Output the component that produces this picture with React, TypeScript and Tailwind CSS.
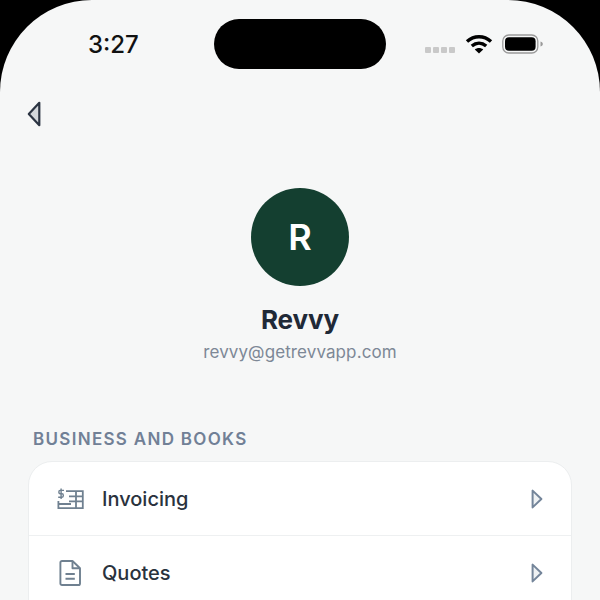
import React from "react";

function Wifi() {
  return (
    <svg width="28" height="20" viewBox="0 0 28 20" fill="none" stroke="#000" strokeWidth="3.4">
      <path d="M2 7.6C9 1.2 19 1.2 26 7.6" />
      <path d="M6.8 12C11.2 8.2 16.8 8.2 21.2 12" />
      <path d="M14 19.5L9.8 15.4C12.3 13.4 15.7 13.4 18.2 15.4Z" fill="#000" stroke="none" />
    </svg>
  );
}

function Battery() {
  return (
    <svg width="42" height="20" viewBox="0 0 42 20">
      <rect x="0.8" y="1" width="35" height="18" rx="6" fill="none" stroke="#9a9a9a" strokeWidth="1.3" />
      <rect x="3" y="3.2" width="30.6" height="13.6" rx="4" fill="#000" />
      <path d="M38.5 7.5C40.2 8 40.8 9 40.8 10S40.2 12 38.5 12.5Z" fill="#9a9a9a" />
    </svg>
  );
}

function BackTriangle() {
  return (
    <svg width="14" height="26" viewBox="0 0 14 26">
      <path d="M12.3 1.8V24.2L1.8 13Z" fill="#d3d7db" stroke="#2b3442" strokeWidth="2.2" strokeLinejoin="round" />
    </svg>
  );
}

function Chevron() {
  return (
    <svg width="12" height="20" viewBox="0 0 12 20">
      <path d="M1.6 1.6V18.4L10.4 10Z" fill="#eef1f3" stroke="#74859a" strokeWidth="2" strokeLinejoin="round" />
    </svg>
  );
}

function InvoiceIcon() {
  return (
    <svg width="27" height="22" viewBox="0 0 27 22" fill="none" stroke="#6f8090" strokeWidth="1.8">
      <path d="M9 3.2H25.8V20.2H1.4V13" />
      <path d="M12 8.4H25.8M12 13.4H25.8M19 3.2V20.2M1.4 16H14" />
      <path d="M7 2.4H3.2C1.4 2.4 1.4 5.8 3.2 5.8H5C6.8 5.8 6.8 9.2 5 9.2H1.2M4.1 0.6V11" strokeWidth="1.4" />
    </svg>
  );
}

function QuoteIcon() {
  return (
    <svg width="22" height="26" viewBox="0 0 22 26" fill="none" stroke="#6f8090" strokeWidth="1.9" strokeLinejoin="round">
      <path d="M3 1H13.5L21 8.2V23.4C21 24.3 20.3 25 19.4 25H3C2.1 25 1.4 24.3 1.4 23.4V2.6C1.4 1.7 2.1 1 3 1Z" />
      <path d="M13.5 1V8.2H21" />
      <path d="M6.5 14H15.8M6.5 18.8H15.8" />
    </svg>
  );
}

function Row({ icon, label, border, inset }: { icon: React.ReactNode; label: string; border?: boolean; inset?: boolean }) {
  return (
    <div className={`flex h-[74px] shrink-0 items-center pl-[28px] pr-[28px] ${border ? "border-b border-[#eef0f1]" : ""}`}>
      <div className={`flex w-[45px] shrink-0 justify-start ${inset ? "pl-[2px]" : ""}`}>{icon}</div>
      <span className="flex-1 text-[20px] font-[450] leading-[26px] text-[#2a323d]">{label}</span>
      <Chevron />
    </div>
  );
}

export default function App() {
  return (
    <div className="h-[600px] w-[600px] overflow-hidden bg-black font-['Inter',sans-serif]">
      <div className="relative flex h-[600px] flex-col rounded-t-[92px] bg-[#f6f7f7]">
        <div className="absolute left-[214px] top-[19px] h-[50px] w-[172px] rounded-full bg-black" />

        <div className="flex h-[88px] shrink-0 items-center pl-[88px] pr-[56px]">
          <span className="mr-auto pt-[1px] text-[24px] font-[550] leading-[87px] text-[#111]">3:27</span>
          <div className="mr-[10px] flex gap-[2px] pt-[12px]">
            <span className="h-[6px] w-[6px] rounded-[1px] bg-[#c9c9c9]" />
            <span className="h-[6px] w-[6px] rounded-[1px] bg-[#c9c9c9]" />
            <span className="h-[6px] w-[6px] rounded-[1px] bg-[#c9c9c9]" />
            <span className="h-[6px] w-[6px] rounded-[1px] bg-[#c9c9c9]" />
          </div>
          <div className="mr-[9px] flex"><Wifi /></div>
          <div className="flex"><Battery /></div>
        </div>

        <div className="flex h-[100px] shrink-0 items-start pl-[27px] pt-[13px]">
          <BackTriangle />
        </div>

        <div className="flex shrink-0 flex-col items-center">
          <div className="flex h-[98px] w-[98px] items-center justify-center rounded-full bg-[#143f30] text-[36px] font-semibold text-white">R</div>
          <div className="mt-[17px] text-[26px] font-bold leading-[34px] tracking-[-0.1px] text-[#1f2937]">Revvy</div>
          <div className="mt-[3px] text-[17px] leading-[24px] tracking-[0.1px] text-[#7d8896]">revvy@getrevvapp.com</div>
        </div>

        <div className="mt-[63px] pl-[33px] text-[17px] font-semibold leading-[24px] tracking-[1.3px] text-[#718096]">BUSINESS AND BOOKS</div>

        <div className="mx-[28px] mt-[10px] flex h-[300px] shrink-0 flex-col rounded-[24px] border border-[#eceeef] bg-white">
          <Row icon={<InvoiceIcon />} label="Invoicing" border />
          <Row icon={<QuoteIcon />} label="Quotes" inset />
        </div>
      </div>
    </div>
  );
}
